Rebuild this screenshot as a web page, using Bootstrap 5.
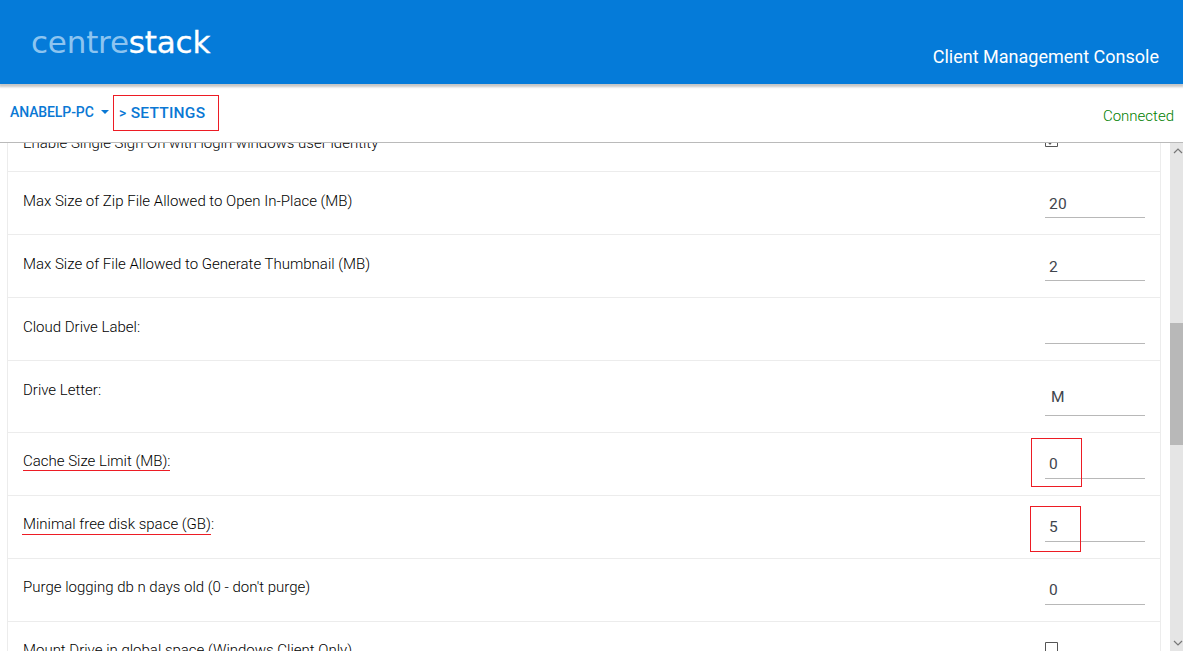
<!DOCTYPE html>
<html lang="en">
<head>
  <meta charset="UTF-8" />
  <meta name="viewport" content="width=device-width, initial-scale=1">
  <title>Client Management Console</title>
  <link href="https://cdn.jsdelivr.net/npm/bootstrap@5.3.0/dist/css/bootstrap.min.css" rel="stylesheet">
  <style>
    body {
      font-family: Roboto, sans-serif;
      font-size: 15px;
      font-weight: 300;
      color: #000;
      background: #fff;
      height: 658px;
    }

    .top-bar {
      height: 84px;
      background: #057bd9;
      padding: 0 24px 0 31px;
      box-shadow: 0 2px 2px 1px rgba(0, 0, 0, 0.22);
      z-index: 2;
    }

    .logo {
      font-family: "DejaVu Sans", sans-serif;
      font-size: 31px;
      line-height: 36px;
      letter-spacing: -0.2px;
      font-weight: 400;
      color: #fff;
      padding-top: 24px;
      -webkit-text-stroke: 0.3px #fff;
    }

    .logo-thin {
      color: #8cc4f0;
      -webkit-text-stroke: 0;
    }

    .console-title {
      font-size: 18px;
      line-height: 24px;
      font-weight: 400;
      color: #fff;
      padding-top: 45px;
    }

    .path-bar {
      height: 59px;
      border-bottom: 1px solid #bababa;
      padding: 0 9px 0 10px;
    }

    .pc-link {
      font-size: 14px;
      line-height: 20px;
      font-weight: 500;
      letter-spacing: -0.1px;
      color: #0a78d4;
      text-decoration: none;
      padding-top: 18px;
      width: 103px;
    }

    .pc-link::after {
      margin-left: 7px;
      vertical-align: 3px;
      border-width: 4px 4px 0;
    }

    .crumb {
      width: 106px;
      height: 36px;
      margin-top: 11px;
      padding-left: 5px;
      border: 1px solid #ed1c24;
      font-size: 15.5px;
      letter-spacing: 0.25px;
      line-height: 34px;
      font-weight: 500;
      color: #0a78d4;
      white-space: nowrap;
    }

    .crumb-arrow {
      font-size: 14px;
    }

    .state {
      color: #008000;
      line-height: 20px;
      padding-top: 22px;
    }

    .view {
      height: 508px;
    }

    .settings {
      margin: -29px 9px 0 7px;
      border: 1px solid #ececec;
      border-width: 0 1px;
    }

    .setting {
      height: 63px;
      border-bottom: 1px solid #ececec;
      padding: 0 15px;
    }

    .setting.short {
      height: 58px;
    }

    .setting.tall {
      height: 72px;
    }

    .setting label {
      line-height: 20px;
      padding-top: 19px;
    }

    .tall ~ .setting label {
      padding-top: 18px;
    }

    .marked {
      display: inline-block;
      height: 20px;
      border-bottom: 1px solid #ed1c24;
    }

    .marked.wide {
      height: 21px;
      margin-left: -1px;
      padding-left: 1px;
    }

    .value-cell {
      width: 100px;
    }

    .value {
      width: 100px;
      height: 46px;
      border: 0;
      border-bottom: 1px solid #b8b8b8;
      border-radius: 0;
      background: transparent;
      padding: 18px 4px 0;
      font-size: 15.5px;
      letter-spacing: 0.3px;
      line-height: 20px;
      font-weight: 400;
      color: #3f454d;
      outline: 0;
    }

    .tall .value {
      height: 55px;
      padding: 17px 6px 0;
    }

    .tall ~ .setting .value {
      padding: 16px 4px 0;
    }

    .box {
      display: block;
      width: 13px;
      height: 13px;
      margin-top: 20px;
    }

    .ring {
      left: -14px;
      top: 5px;
      width: 51px;
      height: 49px;
      border: 1px solid #ed1c24;
    }

    .ring.low {
      left: -15px;
      top: 10px;
      height: 46px;
    }

    .scroll {
      width: 13px;
      background: #e5e5e5;
    }

    .thumb {
      height: 122px;
      margin-top: 180px;
      background: #b8b8b8;
    }
  </style>
</head>
<body class="overflow-hidden">

  <header class="top-bar d-flex justify-content-between align-items-start position-relative">
    <div class="logo"><span class="logo-thin">centre</span>stack</div>
    <div class="console-title">Client Management Console</div>
  </header>

  <nav class="path-bar d-flex align-items-start">
    <a href="#" class="pc-link dropdown-toggle">ANABELP-PC</a>
    <div class="crumb"><span class="crumb-arrow">&gt;</span> SETTINGS</div>
    <span class="state ms-auto">Connected</span>
  </nav>

  <main class="view d-flex overflow-hidden">
    <div class="settings flex-grow-1">
      <div class="setting short d-flex justify-content-between align-items-start">
        <label>Enable Single Sign On with login windows user identity</label>
        <div class="value-cell">
          <svg class="box" viewBox="0 0 13 13" fill="none" stroke="#555"><path d="M.5.5h12v12H.5z"/><path d="M2.5 7 5 9.8l5.5-6.5" stroke-width="1.5"/></svg>
        </div>
      </div>
      <div class="setting d-flex justify-content-between align-items-start">
        <label for="zipSize">Max Size of Zip File Allowed to Open In-Place (MB)</label>
        <div class="value-cell"><input type="text" class="value" id="zipSize" value="20"></div>
      </div>
      <div class="setting d-flex justify-content-between align-items-start">
        <label for="thumbSize">Max Size of File Allowed to Generate Thumbnail (MB)</label>
        <div class="value-cell"><input type="text" class="value" id="thumbSize" value="2"></div>
      </div>
      <div class="setting d-flex justify-content-between align-items-start">
        <label for="driveLabel">Cloud Drive Label:</label>
        <div class="value-cell"><input type="text" class="value" id="driveLabel" value=""></div>
      </div>
      <div class="setting tall d-flex justify-content-between align-items-start">
        <label for="driveLetter">Drive Letter:</label>
        <div class="value-cell"><input type="text" class="value" id="driveLetter" value="M"></div>
      </div>
      <div class="setting d-flex justify-content-between align-items-start">
        <label for="cacheLimit"><span class="marked">Cache Size Limit (MB):</span></label>
        <div class="value-cell position-relative">
          <input type="text" class="value" id="cacheLimit" value="0">
          <div class="ring position-absolute"></div>
        </div>
      </div>
      <div class="setting d-flex justify-content-between align-items-start">
        <label for="freeSpace"><span class="marked wide">Minimal free disk space (GB)</span>:</label>
        <div class="value-cell position-relative">
          <input type="text" class="value" id="freeSpace" value="5">
          <div class="ring low position-absolute"></div>
        </div>
      </div>
      <div class="setting d-flex justify-content-between align-items-start">
        <label for="purgeDays">Purge logging db n days old (0 - don't purge)</label>
        <div class="value-cell"><input type="text" class="value" id="purgeDays" value="0"></div>
      </div>
      <div class="setting d-flex justify-content-between align-items-start">
        <label>Mount Drive in global space (Windows Client Only)</label>
        <div class="value-cell">
          <svg class="box" viewBox="0 0 13 13" fill="none" stroke="#555"><path d="M.5.5h12v12H.5z"/></svg>
        </div>
      </div>
    </div>

    <div class="scroll d-flex flex-column">
      <svg class="position-absolute" width="13" height="17" fill="none" stroke="#777" stroke-width="1.2"><path d="m4 10 4-4 4 4"/></svg>
      <div class="thumb"></div>
      <svg class="mt-auto" width="13" height="17" fill="none" stroke="#777" stroke-width="1.2"><path d="m4 7 4 4 4-4"/></svg>
    </div>
  </main>

  <script src="https://cdn.jsdelivr.net/npm/bootstrap@5.3.0/dist/js/bootstrap.bundle.min.js"></script>
</body>
</html>
